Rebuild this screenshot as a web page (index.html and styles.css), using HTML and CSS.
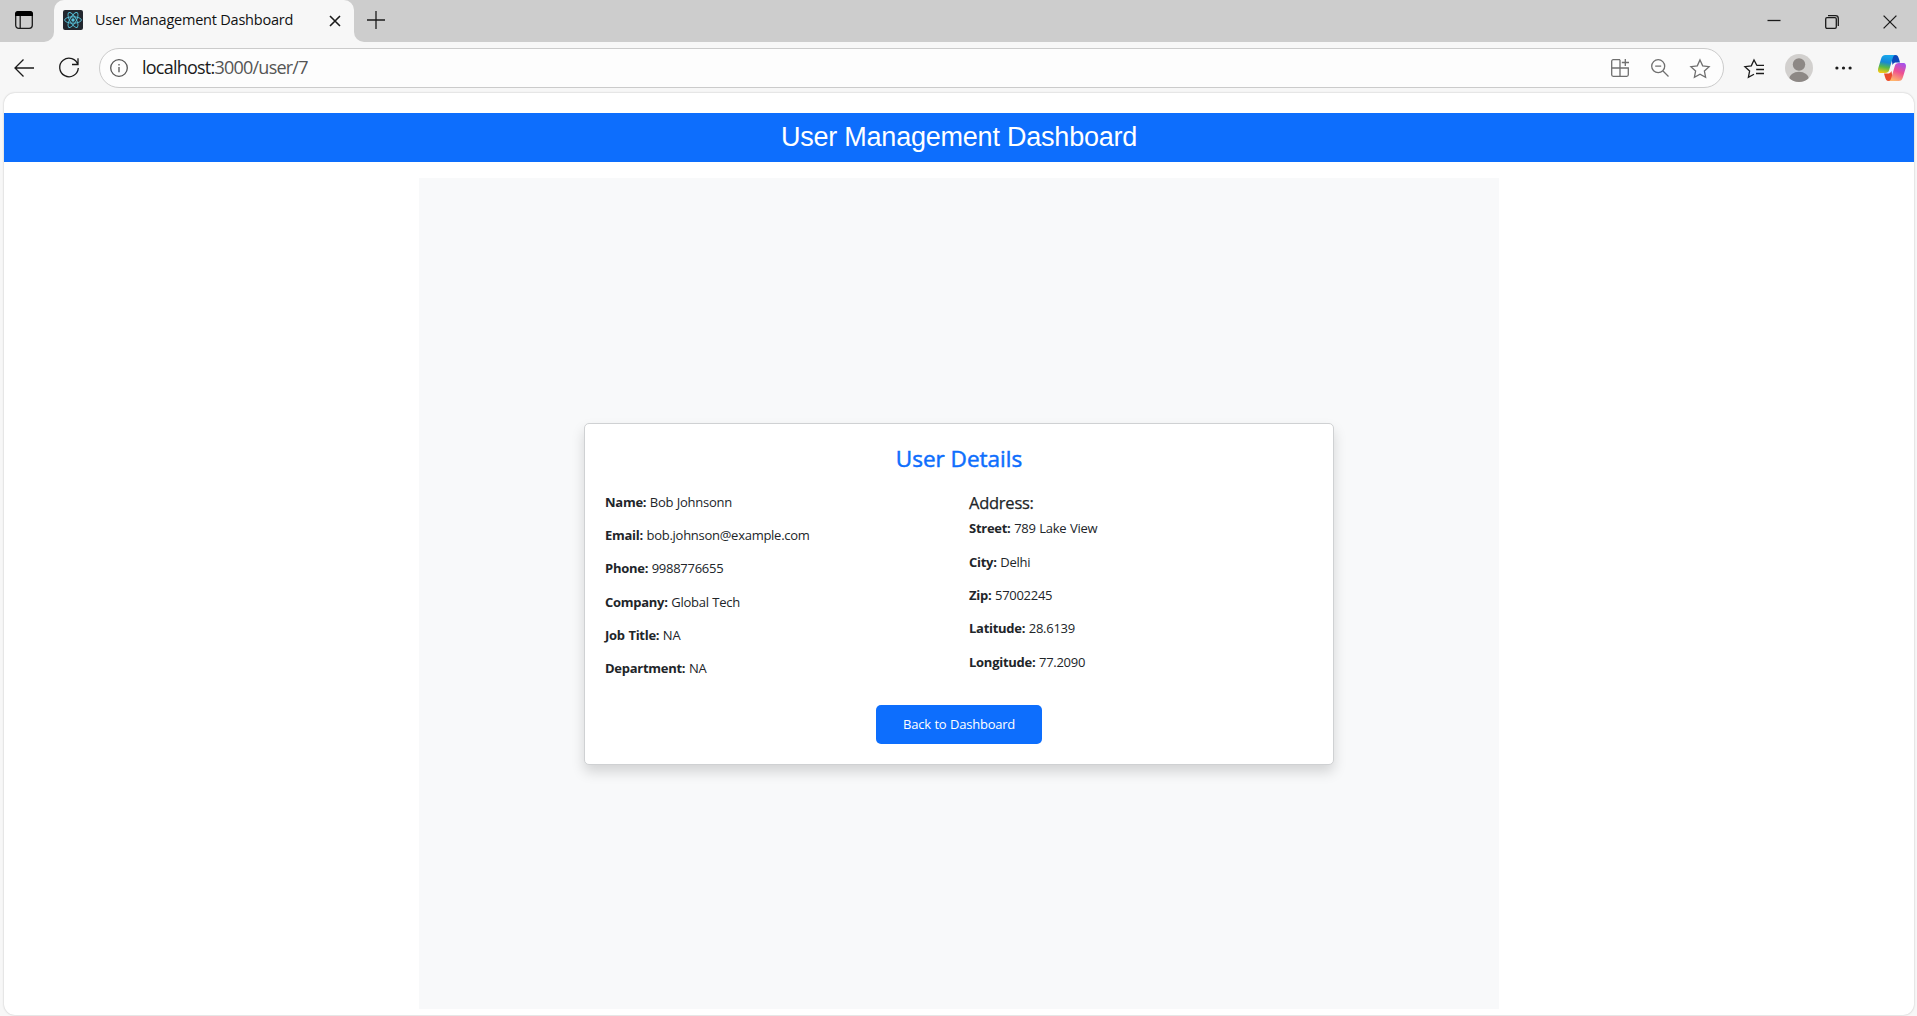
FILE: index.html
```html
<!DOCTYPE html>
<html lang="en">
<head>
<meta charset="utf-8">
<title>User Management Dashboard</title>
<link rel="stylesheet" href="styles.css">
</head>
<body>
<div class="browser">
  <div class="tabstrip">
    <div class="strip-left">
      <svg class="workspace" viewBox="0 0 18 18"><rect x=".7" y=".7" width="16.6" height="16.6" rx="3"/><path class="solid" d="M0 5V3a3 3 0 0 1 3-3h12a3 3 0 0 1 3 3v2z"/><path d="M5.2 5v12.5"/></svg>
    </div>
    <div class="tab">
      <svg class="favicon" viewBox="0 0 20 20"><rect width="20" height="20" rx="2"/><g><ellipse cx="10" cy="10" rx="8.4" ry="3.2"/><ellipse cx="10" cy="10" rx="8.4" ry="3.2" transform="rotate(60 10 10)"/><ellipse cx="10" cy="10" rx="8.4" ry="3.2" transform="rotate(120 10 10)"/></g><circle cx="10" cy="10" r="1.7"/></svg>
      <span class="tab-title">User Management Dashboard</span>
      <svg class="tab-close" viewBox="0 0 12 12"><path d="M1 1l10 10M11 1L1 11"/></svg>
    </div>
    <div class="strip-right">
      <svg class="new-tab" viewBox="0 0 18 18"><path d="M9 0v18M0 9h18"/></svg>
      <div class="window-controls">
        <svg class="minimize" viewBox="0 0 14 14"><path d="M.5 5.500h13"/></svg>
        <svg class="restore" viewBox="0 0 14 14"><rect x=".7" y="2.7" width="10.6" height="10.6" rx="1.3"/><path d="M3 .7h7.5a2.8 2.8 0 0 1 2.8 2.8V11"/></svg>
        <svg class="close" viewBox="0 0 14 14"><path d="M.6.6l12.8 12.8M13.4.6L.6 13.4"/></svg>
      </div>
    </div>
  </div>
  <div class="toolbar">
    <svg class="back" viewBox="0 0 20 18"><path d="M20 9H1M9.500 .5L1 9l8.500 8.500"/></svg>
    <svg class="reload" viewBox="0 0 20 20"><path d="M19 7A9.300 9.300 0 1 0 19.300 10M19 .3V6.500h-6"/></svg>
    <div class="address">
      <svg class="info" viewBox="0 0 18 18"><circle cx="9" cy="9" r="8.3"/><path d="M9 8v5.200M9 5v1.600"/></svg>
      <span class="url">localhost:<span class="path">3000/user/7</span></span>
      <svg class="apps" viewBox="0 0 18 18"><path d="M9 .7H2.200A1.500 1.500 0 0 0 .7 2.200v13.600a1.500 1.500 0 0 0 1.500 1.500h13.600a1.500 1.500 0 0 0 1.500-1.500V9H.7M9 .7v16.600M14.300 0v7M10.800 3.500h7.200"/></svg>
      <svg class="zoom-out" viewBox="0 0 18 18"><circle cx="7.200" cy="7.200" r="6.500"/><path d="M4.200 7.200h6M12 12l5.500 5.500"/></svg>
      <svg class="star" viewBox="0 0 20 19"><path d="M10 .9l2.700 5.900 6.400.8-4.700 4.400 1.200 6.300L10 15.200l-5.600 3.100 1.200-6.300L.9 7.600l6.400-.8z"/></svg>
    </div>
    <svg class="favorites" viewBox="0 0 20 19"><path d="M12.800 6.300L10 .9 7.300 6.800.9 7.600 5.600 12l-1.200 6.300L10 15.200M12.200 10.500H20M12.500 6.300H20M12 14.500h8"/></svg>
    <svg class="avatar" viewBox="0 0 28 28"><defs><clipPath id="face"><circle cx="14" cy="14" r="14"/></clipPath></defs><g clip-path="url(#face)"><rect width="28" height="28" fill="#d2d0ce"/><circle cx="14" cy="10.500" r="6.200" fill="#8d8885"/><ellipse cx="14" cy="25" rx="10" ry="7.200" fill="#8d8885"/></g></svg>
    <svg class="more" viewBox="0 0 17 4"><circle cx="1.900" cy="2" r="1.600"/><circle cx="8.500" cy="2" r="1.600"/><circle cx="15.100" cy="2" r="1.600"/></svg>
    <svg class="copilot" viewBox="0 0 28 26">
      <defs>
        <linearGradient id="cool" x1=".5" y1="0" x2=".3" y2="1"><stop offset="0" stop-color="#18a9ed"/><stop offset=".4" stop-color="#1688d8"/><stop offset=".68" stop-color="#58b947"/><stop offset="1" stop-color="#f5c915"/></linearGradient>
        <linearGradient id="warm" x1=".8" y1="0" x2=".4" y2="1"><stop offset="0" stop-color="#a451ed"/><stop offset=".5" stop-color="#ee5091"/><stop offset="1" stop-color="#ffb56b"/></linearGradient>
      </defs>
      <path fill="#0c49bb" d="M13 0h4.500c2 0 2.700 1.500 3.500 4l1 3.500h-3.500c-2 0-3 .5-4 2.500z"/>
      <path fill="url(#cool)" d="M7.500 0H18c-2.500 0-3 2-3.700 4.500L11.200 15c-.7 2.200-1.800 3-4 3H3c-2.700 0-3.500-2-2.700-5L3 4C4 1 5 0 7.500 0z"/>
      <path fill="#ea4c2d" d="M15 26h-4.500c-2 0-2.700-1.500-3.500-4l-1-3.500h3.500c2 0 3-.5 4-2.500z"/>
      <path fill="url(#warm)" d="M20.500 26H10c2.500 0 3-2 3.700-4.500L16.800 11c.7-2.200 1.800-3 4-3H25c2.700 0 3.500 2 2.700 5L25 22c-1 3-2 4-4.500 4z"/>
    </svg>
  </div>
  <main class="page">
    <h1 class="banner">User Management Dashboard</h1>
    <div class="panel">
      <section class="card">
        <h2 class="card-title">User Details</h2>
        <div class="details">
          <div class="column">
            <p class="field"><strong>Name:</strong> Bob Johnsonn</p>
            <p class="field"><strong>Email:</strong> bob.johnson@example.com</p>
            <p class="field"><strong>Phone:</strong> 9988776655</p>
            <p class="field"><strong>Company:</strong> Global Tech</p>
            <p class="field"><strong>Job Title:</strong> NA</p>
            <p class="field"><strong>Department:</strong> NA</p>
          </div>
          <div class="column">
            <h3 class="subtitle">Address:</h3>
            <p class="field"><strong>Street:</strong> 789 Lake View</p>
            <p class="field"><strong>City:</strong> Delhi</p>
            <p class="field"><strong>Zip:</strong> 57002245</p>
            <p class="field"><strong>Latitude:</strong> 28.6139</p>
            <p class="field"><strong>Longitude:</strong> 77.2090</p>
          </div>
        </div>
        <button class="button">Back to Dashboard</button>
      </section>
    </div>
  </main>
</div>
</body>
</html>
```
FILE: styles.css
```css
* { box-sizing: border-box; }
body { margin: 0; font-family: "Open Sans", sans-serif; color: #212529; }
h1, h2, h3, p { margin: 0; }
svg { display: block; flex: none; fill: none; stroke: #1b1b1b; stroke-width: 1.3; overflow: visible; }

.browser { height: 1016px; display: flex; flex-direction: column; background: #f7f7f7; overflow: hidden; }

.tabstrip { height: 43px; display: flex; background: #f7f7f7; flex: none; }
.strip-left { width: 54px; height: 42px; background: #cdcdcd; border-bottom-right-radius: 10px; padding: 11px 0 0 15px; }
.workspace { width: 18px; height: 18px; }
.workspace .solid { fill: #000; stroke: none; }
.tab { width: 300px; height: 43px; display: flex; align-items: center; padding: 0 13px 3px 9px; background: linear-gradient(#cdcdcd, #cdcdcd) top / 100% 10px no-repeat; position: relative; z-index: 0; }
.tab::before { content: ""; position: absolute; inset: 0; z-index: -1; background: #f7f7f7; border-radius: 10px 10px 0 0; }
.favicon { width: 20px; height: 20px; stroke: #58c4dc; stroke-width: .9; }
.favicon rect { fill: #23272f; stroke: none; }
.favicon circle { fill: #58c4dc; stroke: none; }
.tab-title { flex: 1; margin-left: 12px; padding-bottom: 2px; font-size: 14.5px; letter-spacing: -.22px; color: #111; white-space: nowrap; }
.tab-close { width: 12px; height: 12px; stroke-width: 1.6; margin-top: 2px; }
.strip-right { flex: 1; height: 42px; background: #cdcdcd; border-bottom-left-radius: 10px; display: flex; justify-content: space-between; padding: 0 20px 0 13px; }
.new-tab { width: 18px; height: 18px; margin-top: 11px; }
.window-controls { display: flex; gap: 44px; padding-top: 15px; }
.window-controls svg { width: 14px; height: 14px; }

.toolbar { height: 50px; display: flex; align-items: center; padding: 0 11px 0 14px; flex: none; }
.back { width: 20px; height: 18px; }
.reload { width: 20px; height: 20px; margin-left: 25px; }
.address { width: 1625px; height: 40px; margin-left: 20px; border: 1px solid #cbcbcb; border-radius: 20px; background: #fdfdfd; display: flex; align-items: center; padding: 0 13px 0 10px; }
.address svg { stroke: #6f6f6f; }
.address .info { width: 18px; height: 18px; stroke: #555; }
.url { flex: 1; margin-left: 14px; padding-bottom: 2px; font-size: 18px; letter-spacing: -.77px; color: #1b1b1b; }
.path { color: #555; }
.apps { width: 18px; height: 18px; }
.zoom-out { width: 18px; height: 18px; margin-left: 22px; }
.star { width: 20px; height: 19px; margin-left: 21px; }
.favorites { width: 20px; height: 19px; margin-left: 20px; }
.avatar { width: 28px; height: 28px; margin-left: 21px; stroke: none; }
.more { width: 17px; height: 4px; margin-left: 22px; stroke: none; fill: #1b1b1b; }
.more circle { fill: #1b1b1b; }
.copilot { width: 28px; height: 26px; margin-left: 26px; stroke: none; }

.page { flex: none; width: 1910px; height: 922px; margin-left: 4px; padding-top: 20px; background: #fff; border-radius: 11px; box-shadow: 0 0 2px rgba(0, 0, 0, .25); display: flex; flex-direction: column; align-items: center; }
.banner { width: 100%; height: 49px; background: #0d6efd; color: #fff; font: 400 27px/49px "Liberation Sans", Arial, sans-serif; letter-spacing: -.22px; text-align: center; }
.panel { width: 1080px; height: 831px; margin-top: 16px; background: #f8f9fa; display: flex; align-items: center; justify-content: center; }
.card { width: 750px; height: 342px; background: #fff; border: 1px solid #cfd1d3; border-radius: 5px; box-shadow: 0 7px 13px rgba(0, 0, 0, .15); padding: 20px; display: flex; flex-direction: column; align-items: center; }
.card-title { font-size: 22.5px; line-height: 29px; font-weight: 500; color: #0d6efd; -webkit-text-stroke: .5px; }
.details { width: 100%; display: grid; grid-template-columns: 364px 1fr; margin-top: 19px; height: 193px; }
.field { font-size: 13px; line-height: 20px; margin-bottom: 13.35px; letter-spacing: -.27px; word-spacing: .5px; white-space: nowrap; }
.subtitle { font-size: 16.5px; line-height: 22px; font-weight: 500; margin-bottom: 4.7px; letter-spacing: -.25px; -webkit-text-stroke: .25px; }
.button { width: 166px; height: 39px; margin-top: 20px; padding: 0; border: 0; border-radius: 5px; background: #0d6efd; color: #fff; font-family: inherit; font-size: 13px; letter-spacing: -.25px; word-spacing: .6px; }
```
